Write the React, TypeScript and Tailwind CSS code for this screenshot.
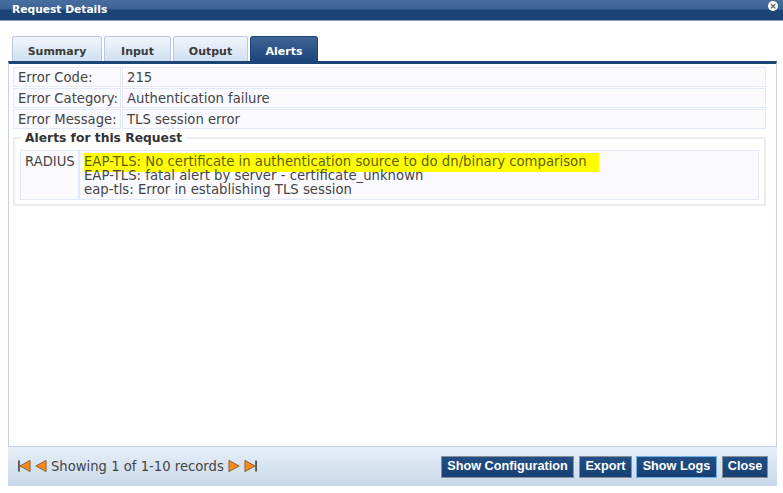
import React from 'react';

const font = { fontFamily: '"DejaVu Sans", Verdana, sans-serif' };

function Arrow({ dir, bar }: { dir: 'left' | 'right'; bar?: boolean }) {
  const pts = dir === 'left' ? '13,1 13,13 2,7' : '1,1 1,13 12,7';
  return (
    <svg width="13" height="14" viewBox="0 0 14 14">
      <polygon points={pts} fill="#f58a1f" stroke="#8a5a2a" strokeWidth="1" />
      {bar && (dir === 'left' ? (
        <rect x="0" y="1" width="2" height="12" fill="#555" />
      ) : (
        <rect x="12" y="1" width="2" height="12" fill="#555" />
      ))}
    </svg>
  );
}

function Tab({ label, width, active }: { label: string; width: string; active?: boolean }) {
  return (
    <div
      className={`${width} h-[25px] flex items-center justify-center rounded-t-[3px] border border-b-0 text-[11px] font-bold pt-[6px] ${
        active
          ? 'bg-gradient-to-b from-[#3f6595] to-[#1b4479] border-[#1b4479] text-white'
          : 'bg-gradient-to-b from-[#f2f6fc] to-[#cfe0f2] border-[#b9c6e6] text-[#3a3a3a]'
      }`}
    >
      {label}
    </div>
  );
}

function InfoRow({ label, value }: { label: string; value: string }) {
  return (
    <div className="flex gap-[1px] h-[20px] leading-[20px]">
      <div className="w-[108px] shrink-0 bg-[#fbfbff] border border-[#e2e9fb] px-[4px] whitespace-nowrap">{label}</div>
      <div className="flex-1 bg-[#fbfbff] border border-[#e2e9fb] px-[4px]">{value}</div>
    </div>
  );
}

function FooterButton({ label, width, focused }: { label: string; width: string; focused?: boolean }) {
  return (
    <button
      className={`${width} h-[22px] bg-gradient-to-b from-[#234f84] to-[#173f73] text-white text-[12.7px] font-bold border whitespace-nowrap ${
        focused ? 'border-[#6fb2ea]' : 'border-[#8a8f96]'
      }`}
      style={{ fontFamily: '"Liberation Sans", Arial, sans-serif' }}
    >
      {label}
    </button>
  );
}

export default function App() {
  return (
    <div className="w-[783px] h-[493px] bg-white flex flex-col overflow-hidden text-[13.2px] text-[#444]" style={font}>
      {/* title bar */}
      <div className="h-[21px] shrink-0 flex items-center justify-between pl-[12px] pr-[5px] border-b border-[#8aa0cc] bg-[linear-gradient(to_bottom,#486e9f_0%,#3e6496_45%,#1b4477_50%,#1b4477_100%)]">
        <span className="text-[10.7px] font-bold text-white">Request Details</span>
        <div className="relative -top-[4px] w-[10px] h-[10px] rounded-full bg-white flex items-center justify-center">
          <span className="text-[#555] text-[9px] leading-none font-bold">×</span>
        </div>
      </div>

      {/* tabs */}
      <div className="flex gap-[2px] pl-[12px] pt-[15px] h-[40px] shrink-0 items-start">
        <Tab label="Summary" width="w-[90px]" />
        <Tab label="Input" width="w-[67px]" />
        <Tab label="Output" width="w-[75px]" />
        <Tab label="Alerts" width="w-[68px]" active />
      </div>

      {/* panel */}
      <div className="mx-[8px] w-[769px] h-[386px] shrink-0 border-t-[3px] border-t-[#1b4479] border-x border-x-[#c5cfee] border-b border-b-[#c5cfee] pl-[4px] pr-[10px] pt-[3px] flex flex-col gap-[1px]">
        <InfoRow label="Error Code:" value="215" />
        <InfoRow label="Error Category:" value="Authentication failure" />
        <InfoRow label="Error Message:" value="TLS session error" />

        <div className="relative mt-[7px] h-[69px] border-2 border-[#ececec] pl-[5px] pr-[5px] pt-[11px]">
          <div className="absolute -top-[9px] left-[6px] bg-white px-[4px] text-[12.3px] font-bold text-[#333] leading-[16px]">
            Alerts for this Request
          </div>
          <div className="flex h-[50px] border border-[#e2e9fb] bg-[#fbfbff]">
            <div className="w-[59px] shrink-0 border-r-2 border-r-[#e2e9fb] pl-[4px] pt-[4px] leading-[14px]">RADIUS</div>
            <div className="pl-[4px] pt-[2px] leading-[14px] text-[13.25px]">
              <div className="bg-[#ffff00] w-[515px] h-[19px] -mb-[3px] pt-[2px] text-[#5f5f00]">EAP-TLS: No certificate in authentication source to do dn/binary comparison</div>
              <div>EAP-TLS: fatal alert by server - certificate_unknown</div>
              <div>eap-tls: Error in establishing TLS session</div>
            </div>
          </div>
        </div>
      </div>

      {/* footer */}
      <div className="mx-[8px] w-[769px] h-[39px] shrink-0 flex items-center justify-between pl-[10px] pr-[9px] bg-gradient-to-b from-[#e8eff9] to-[#c8d8e8]">
        <div className="flex items-center gap-[3px]">
          <Arrow dir="left" bar />
          <Arrow dir="left" />
          <span className="mx-[1px]">Showing 1 of 1-10 records</span>
          <Arrow dir="right" />
          <Arrow dir="right" bar />
        </div>
        <div className="flex gap-[4px]">
          <FooterButton label="Show Configuration" width="w-[133px] mr-[1px]" />
          <FooterButton label="Export" width="w-[53px]" />
          <FooterButton label="Show Logs" width="w-[81px] mr-[1px]" focused />
          <FooterButton label="Close" width="w-[46px]" />
        </div>
      </div>
    </div>
  );
}
